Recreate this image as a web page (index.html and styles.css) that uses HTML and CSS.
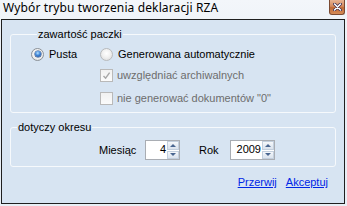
FILE: index.html
```html
<!DOCTYPE html>
<html lang="pl">
<head>
<meta charset="utf-8">
<title>Wybór trybu tworzenia deklaracji RZA</title>
<link rel="stylesheet" href="styles.css">
</head>
<body>
<div class="window">
  <div class="titlebar">
    <span class="title">Wybór trybu tworzenia deklaracji RZA</span>
    <span class="close"><svg width="9" height="8" viewBox="0 0 9 8"><path d="M1.5 1 L7.5 7 M7.5 1 L1.5 7" stroke="#3a2a4a" stroke-width="3" stroke-linecap="round"/><path d="M1.5 1 L7.5 7 M7.5 1 L1.5 7" stroke="#ffffff" stroke-width="1.6" stroke-linecap="round"/></svg></span>
  </div>
  <div class="client">
    <fieldset class="group group-content">
      <legend>zawartość paczki</legend>
      <div class="radio-row">
        <label class="opt opt-first"><span class="radio checked"></span>Pusta</label>
        <label class="opt"><span class="radio"></span>Generowana automatycznie</label>
      </div>
      <label class="opt check-row check-row-1 disabled"><span class="check"><svg width="9" height="9" viewBox="0 0 9 9"><path d="M1.5 5 L3.6 7.2 L7.6 1.6" fill="none" stroke="#a7a7a7" stroke-width="1.4"/></svg></span>uwzględniać archiwalnych</label>
      <label class="opt check-row check-row-2 disabled"><span class="check"></span>nie generować dokumentów "0"</label>
    </fieldset>
    <fieldset class="group group-period">
      <legend>dotyczy okresu</legend>
      <div class="period-row">
        <span class="field-label label-month">Miesiąc</span>
        <div class="spin spin-month">
          <span class="spin-value">4</span>
          <span class="spin-buttons"><span class="spin-btn up"></span><span class="spin-btn down"></span></span>
        </div>
        <span class="field-label label-year">Rok</span>
        <div class="spin spin-year">
          <span class="spin-value">2009</span>
          <span class="spin-buttons"><span class="spin-btn up"></span><span class="spin-btn down"></span></span>
        </div>
      </div>
    </fieldset>
    <div class="actions">
      <a href="#" class="link">Przerwij</a>
      <a href="#" class="link">Akceptuj</a>
    </div>
  </div>
</div>
</body>
</html>
```

FILE: styles.css
```css
* { box-sizing: border-box; }
html, body { margin: 0; padding: 0; }
body {
  width: 347px;
  height: 206px;
  overflow: hidden;
  font-family: "Liberation Sans", Arial, sans-serif;
  font-size: 11px;
  color: #000;
}
.window {
  width: 347px;
  height: 206px;
  background: linear-gradient(to bottom, #f3f6fa 0%, #e6edf5 40%, #e9eff6 100%);
}
.titlebar {
  height: 19px;
  display: flex;
  align-items: flex-start;
  justify-content: space-between;
}
.title {
  font-family: "Noto Sans", "Open Sans", sans-serif;
  font-size: 12px;
  line-height: 15px;
  letter-spacing: 0.12px;
  padding: 0 0 0 3px;
  color: #000;
}
.close {
  width: 16px;
  height: 15px;
  margin-right: 2px;
  border: 1px solid #7a4a32;
  border-top: none;
  border-radius: 0 0 3px 3px;
  background: linear-gradient(to bottom, #e8b494 0%, #d58a5e 45%, #c06a36 55%, #d68c58 100%);
  display: flex;
  align-items: center;
  justify-content: center;
}
.close svg { display: block; }
.client {
  margin-left: 1px;
  width: 344px;
  height: 185px;
  border: 1px solid #1f1f1f;
  background: #d7e4f2;
  padding: 8px 8px 0 8px;
}
.group {
  margin: 0;
  padding: 0;
  border: 1px solid #f6f9fc;
  border-radius: 3px;
  min-width: 0;
}
.group legend {
  margin-left: 6px;
  padding: 0 1px;
  line-height: 13px;
}
.group-content {
  padding: 5px 0 6px 20px;
}
.radio-row {
  display: flex;
  height: 16px;
  align-items: center;
}
.opt {
  display: flex;
  align-items: center;
  height: 16px;
}
.opt-first { width: 69px; }
.radio {
  width: 13px;
  height: 13px;
  border-radius: 50%;
  border: 1px solid #b8babc;
  background: radial-gradient(circle at 50% 40%, #ffffff 0%, #f1f1f1 45%, #d8d8d8 100%);
  margin-right: 5px;
  flex: none;
  display: flex;
  align-items: center;
  justify-content: center;
}
.radio.checked {
  border-color: #8c9197;
  background: radial-gradient(circle at 50% 40%, #ffffff 0%, #eeeeee 60%, #d0d0d0 100%);
}
.radio.checked::after {
  content: "";
  width: 6px;
  height: 6px;
  border-radius: 50%;
  background: radial-gradient(circle at 45% 35%, #b8e2ff 0%, #3f86d8 45%, #173e86 100%);
  box-shadow: 0 0 0 0.5px #1b3f7a;
}
.check-row { margin-left: 69px; }
.check-row-1 { margin-top: 5px; }
.check-row-2 { margin-top: 7px; }
.check {
  width: 13px;
  height: 13px;
  border: 1px solid #b9b9b9;
  background: linear-gradient(to bottom, #f1f1f1, #fbfbfb);
  margin-right: 4px;
  flex: none;
  display: flex;
  align-items: center;
  justify-content: center;
}
.check svg { display: block; }
.disabled { color: #6d6d6d; }
.group-period {
  margin-top: 8px;
  padding: 6px 0 6px 0;
}
.period-row {
  display: flex;
  align-items: center;
  height: 20px;
  padding-left: 88px;
}
.field-label { flex: none; }
.label-month { width: 46px; }
.label-year { width: 31px; margin-left: 19px; }
.spin {
  height: 20px;
  border: 1px solid #a9adb3;
  background: #fff;
  display: flex;
  align-items: stretch;
  flex: none;
}
.spin-month { width: 35px; }
.spin-year { width: 45px; }
.spin-value {
  flex: 1;
  text-align: right;
  padding-right: 1px;
  padding-top: 2px;
  line-height: 13px;
}
.spin-buttons {
  width: 12px;
  display: flex;
  flex-direction: column;
  gap: 1px;
  padding: 0;
}
.spin-btn {
  flex: 1;
  border: 1px solid #c3cfdd;
  background: linear-gradient(to bottom, #f6f8fb 0%, #e6ecf3 50%, #dbe3ee 100%);
  display: flex;
  align-items: center;
  justify-content: center;
}
.spin-btn.up::after {
  content: "";
  border-left: 3px solid transparent;
  border-right: 3px solid transparent;
  border-bottom: 3px solid #4a6690;
}
.spin-btn.down::after {
  content: "";
  border-left: 3px solid transparent;
  border-right: 3px solid transparent;
  border-top: 3px solid #4a6690;
}
.actions {
  display: flex;
  justify-content: flex-end;
  gap: 9px;
  margin-top: 9px;
  padding-right: 8px;
  line-height: 13px;
}
.link {
  color: #0026e6;
  text-decoration: underline;
}
```
